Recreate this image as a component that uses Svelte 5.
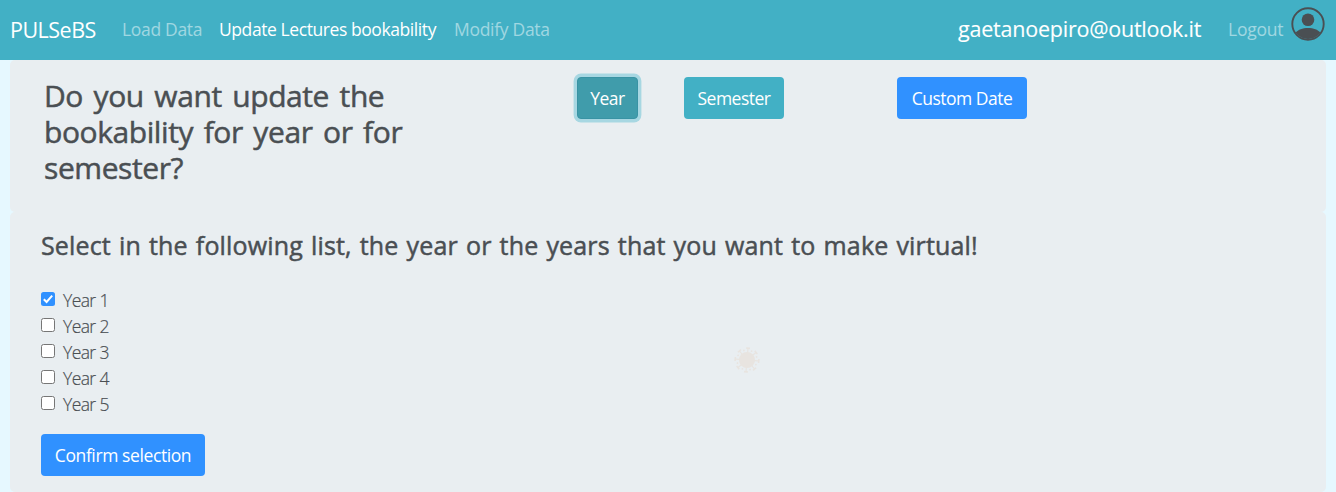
<script>
  const links = [
    { label: 'Load Data', cls: 'load' },
    { label: 'Update Lectures bookability', cls: 'update active' },
    { label: 'Modify Data', cls: 'modify' }
  ];
  let years = $state([1, 2, 3, 4, 5].map((n) => ({ n, checked: n === 1 })));
  const spikes = [0, 45, 90, 135, 180, 225, 270, 315];
</script>

<nav>
  <a class="brand" href="#home">PULSeBS</a>
  <div class="links">
    {#each links as link}
      <a class={link.cls} href="#nav">{link.label}</a>
    {/each}
  </div>
  <div class="account">
    <span class="email">gaetanoepiro@outlook.it</span>
    <a class="logout" href="#logout">Logout</a>
    <svg class="avatar" viewBox="0 0 34 34" width="34" height="34" aria-hidden="true">
      <circle cx="17" cy="17" r="15.7" fill="none" stroke="#4a4f53" stroke-width="1.9" />
      <circle cx="17" cy="12.8" r="6.3" fill="#4a4f53" />
      <path d="M4.800 25.600C7 22.700 11.500 21 17 21S27 22.700 29.200 25.600C26.600 29.600 22 32 17 32S7.400 29.600 4.800 25.600Z" fill="#4a4f53" />
    </svg>
  </div>
</nav>

<main>
  <section class="question">
    <h2>Do you want update the bookability for year or for semester?</h2>
    <div class="choices">
      <button class="year">Year</button>
      <button class="semester">Semester</button>
      <button class="custom">Custom Date</button>
    </div>
  </section>

  <section class="selection">
    <h4>Select in the following list, the year or the years that you want to make virtual!</h4>
    <div class="years">
      {#each years as year}
        <label>
          <input type="checkbox" bind:checked={year.checked} />
          <span class="box" class:checked={year.checked}>
            {#if year.checked}
              <svg viewBox="0 0 14 14" width="14" height="14"><path d="M2.8 7.200L5.600 10L11.200 3.700" fill="none" stroke="#fff" stroke-width="2" /></svg>
            {/if}
          </span>
          <span class="name">Year {year.n}</span>
        </label>
      {/each}
    </div>
    <button class="confirm">Confirm selection</button>
    <svg class="virus" viewBox="-14 -14 28 28" width="28" height="28" aria-hidden="true">
      <circle r="8" />
      {#each spikes as angle}
        <g transform="rotate({angle + 5})">
          <path d="M-.6-7V-11H-2V-12.600H2V-11H.6V-7Z" />
          <circle r=".9" cx="3.800" cy="-9.300" />
        </g>
      {/each}
    </svg>
  </section>
</main>

<style>
  :global(body) {
    margin: 0;
    background: #e6f8ff;
    font-family: "Open Sans", "Noto Sans", sans-serif;
    color: #4a4f53;
    overflow: hidden;
  }
  nav {
    box-sizing: border-box;
    height: 60px;
    background: #42b0c5;
    display: flex;
    align-items: center;
    padding: 0 11px 0 10px;
    white-space: nowrap;
  }
  nav a { color: rgba(255, 255, 255, .5); text-decoration: none; font-size: 17.5px; line-height: 26px; }
  nav .brand { color: #fff; font-size: 21.500px; letter-spacing: -.5px; width: 112px; flex: none; margin-top: -1px; }
  .links { display: flex; margin-top: -2px; }
  .load { width: 97px; letter-spacing: -.32px; }
  .update { width: 235px; letter-spacing: -.42px; }
  .modify { letter-spacing: -.3px; }
  nav a.active { color: #fff; }
  .account { margin-left: auto; display: flex; align-items: center; }
  .email { color: #fff; font-size: 21.500px; line-height: 28px; width: 270px; letter-spacing: -.22px; margin-top: -2px; -webkit-text-stroke: .1px; }
  .logout { width: 63px; letter-spacing: -.25px; margin-top: -2px; }
  .avatar { margin-top: -13px; display: block; }

  main { padding: 0 10px; }
  section { box-sizing: border-box; background: #e9eef1; border-radius: 5px; display: flow-root; }
  .question { height: 152px; display: flex; padding: 17px 0 0 34px; }
  h2 {
    margin: 1px 129px 0 0;
    width: 400px;
    font-size: 30px;
    line-height: 36px;
    font-weight: 400;
    letter-spacing: -.42px;
    word-spacing: 3.2px;
    -webkit-text-stroke: .5px;
  }
  .choices { display: flex; align-items: flex-start; }
  button {
    box-sizing: border-box;
    height: 42px;
    border: 0;
    border-radius: 4px;
    background: #3091ff;
    color: #fff;
    font-family: inherit;
    font-size: 17.500px;
    line-height: 26px;
    padding: 0 0 1px;
    white-space: nowrap;
    letter-spacing: -.5px;
  }
  .year { width: 61px; margin-left: 4px; background: #409cab; border: 1px solid #3993a4; box-shadow: 0 0 0 3.400px #a7d7e2; }
  .semester { width: 100px; margin-left: 46px; background: #42b0c5; }
  .custom { width: 130px; margin-left: 113px; }

  .selection { height: 280px; padding: 18px 31px 0; position: relative; }
  h4 {
    margin: 0;
    font-size: 25px;
    line-height: 30px;
    font-weight: 400;
    white-space: nowrap;
    letter-spacing: .16px;
    word-spacing: 1.4px;
    -webkit-text-stroke: .5px;
  }
  .years { margin-top: 28px; }
  label { display: flex; height: 26px; font-size: 17.500px; line-height: 24px; position: relative; }
  input { position: absolute; opacity: 0; margin: 0; }
  .box {
    box-sizing: border-box;
    width: 14px;
    height: 14px;
    margin: 4px 8px 0 0;
    background: #fff;
    border: 1px solid #767676;
    border-radius: 2.500px;
  }
  .box.checked { background: #3091ff; border: 0; }
  .box svg { display: block; }
  .name { font-weight: 300; letter-spacing: -.6px; -webkit-text-stroke: .2px; }
  .confirm { width: 164px; margin-top: 16px; display: block; letter-spacing: -.4px; }
  .virus { position: absolute; left: 723px; top: 134px; fill: #e8e4e0; }
</style>
